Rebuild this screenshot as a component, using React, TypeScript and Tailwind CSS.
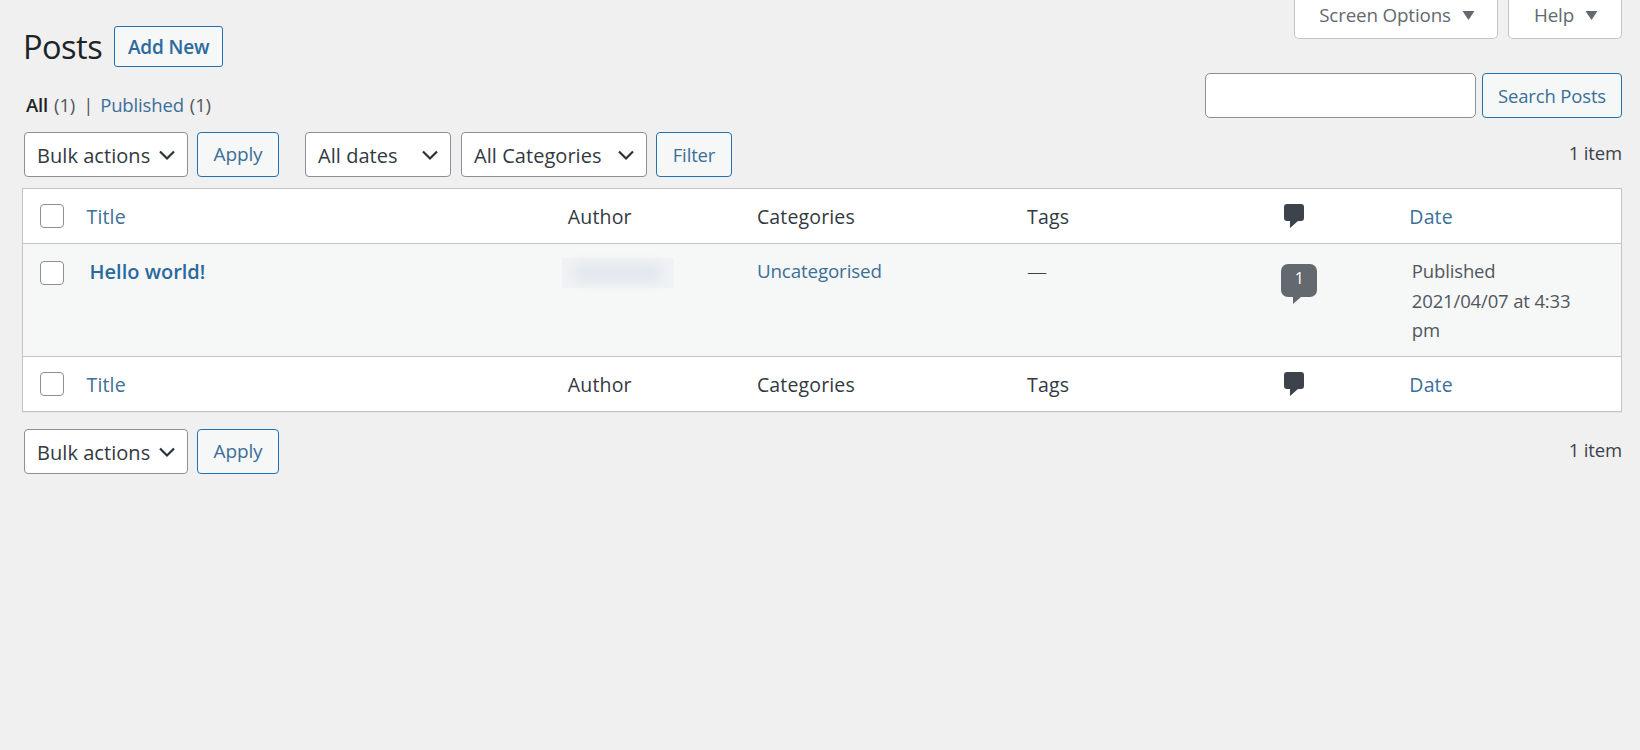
import React from "react";

const Chevron = () => (
  <svg width="18" height="12" viewBox="0 0 18 12" className="shrink-0">
    <path d="M2 2.5 L9 9.5 L16 2.5" fill="none" stroke="#2c3338" strokeWidth="2.2" />
  </svg>
);

const Caret = () => (
  <svg width="13" height="9" viewBox="0 0 13 9" className="shrink-0">
    <path d="M0.5 0 H12.5 L6.5 9 Z" fill="#646970" />
  </svg>
);

const CommentIcon = () => (
  <svg width="20" height="24" viewBox="0 0 20 24" className="block">
    <path d="M3 0 H17 Q20 0 20 3 V14 Q20 17 17 17 H14 L6 24 V17 H3 Q0 17 0 14 V3 Q0 0 3 0 Z" fill="#3c434a" />
  </svg>
);

function Select({ label, className }: { label: string; className: string }) {
  return (
    <div className={`flex h-[45px] items-center justify-between rounded-[4px] border border-[#8c8f94] bg-white pl-[12px] pr-[11px] text-[20px] tracking-[0.05px] text-[#32393f] ${className}`}>
      <span className="pt-[2px]">{label}</span>
      <Chevron />
    </div>
  );
}

function OutlineButton({ label, className }: { label: string; className: string }) {
  return (
    <button className={`flex h-[45px] items-center justify-center rounded-[4px] border border-[#2271b1] bg-[#f6f7f7] text-[#3b6f98] ${className}`}>
      {label}
    </button>
  );
}

function HeadRow({ top }: { top?: boolean }) {
  const cell = "p-0 font-normal text-left align-middle";
  return (
    <tr className={top ? "h-[55px] border-b border-[#c3c4c7] text-[19.5px] tracking-[0.15px]" : "h-[55px] text-[19.5px] tracking-[0.15px]"}>
      <td className={cell}>
        <input type="checkbox" className="ml-[17px] block h-[24px] w-[24px] appearance-none rounded-[4px] border border-[#8c8f94] bg-white" />
      </td>
      <td className={`${cell} pl-[9px] pt-px text-[#3b6f98]`}>Title</td>
      <td className={`${cell} pl-[11px] pt-px text-[#32393f]`}>Author</td>
      <td className={`${cell} pl-[11px] pt-px text-[#32393f]`}>Categories</td>
      <td className={`${cell} pl-[11px] pt-px text-[#32393f]`}>Tags</td>
      <td className={`${cell} pl-[11px]`}><CommentIcon /></td>
      <td className={`${cell} pl-[10px] pt-px text-[#3b6f98]`}>Date</td>
    </tr>
  );
}

export default function App() {
  return (
    <div className="h-[750px] overflow-hidden bg-[#f0f0f1] pl-[22px] pr-[18px] font-['Open_Sans','Liberation_Sans',sans-serif] text-[18.5px] tracking-[-0.15px] text-[#3c434a]">
      <div className="flex h-[132px] justify-between">
        <div className="pt-[26px]">
          <div className="flex items-center">
            <h1 className="ml-px text-[32.5px] leading-[41px] font-normal tracking-[-0.5px] text-[#1d2327]">Posts</h1>
            <button className="ml-[12px] flex h-[41px] w-[109px] items-center justify-center rounded-[3px] border border-[#2271b1] bg-[#f6f7f7] pt-[2px] text-[19px] font-semibold text-[#2a6a9c]">Add New</button>
          </div>
          <div className="mt-[23px] ml-[4px] flex items-center leading-[30px] text-[#50575e]">
            <span className="font-semibold text-[#1d2327]">All</span>
            <span className="ml-[6px]">(1)</span>
            <span className="mx-[8px]">|</span>
            <span className="-ml-px text-[#3b6f98]">Published</span>
            <span className="ml-[6px]">(1)</span>
          </div>
        </div>
        <div className="flex flex-col items-end">
          <div className="flex h-[39px] gap-[10px] text-[18.8px] text-[#646970]">
            <div className="flex w-[204px] items-center justify-center gap-[11px] rounded-b-[5px] border border-t-0 border-[#c3c4c7] bg-white pb-[8px] pl-[2px]">Screen Options <Caret /></div>
            <div className="flex w-[114px] items-center justify-center gap-[11px] rounded-b-[5px] border border-t-0 border-[#c3c4c7] bg-white pb-[8px] pl-[2px]">Help <Caret /></div>
          </div>
          <div className="mt-[34px] flex gap-[6px]">
            <input className="h-[45px] w-[271px] rounded-[5px] border border-[#8c8f94] bg-white" />
            <OutlineButton label="Search Posts" className="w-[140px]" />
          </div>
        </div>
      </div>

      <div className="flex h-[45px] items-start">
        <Select label="Bulk actions" className="ml-[2px] w-[164px]" />
        <OutlineButton label="Apply" className="ml-[9px] w-[82px] text-[19px]" />
        <Select label="All dates" className="ml-[26px] w-[146px]" />
        <Select label="All Categories" className="ml-[10px] w-[186px]" />
        <OutlineButton label="Filter" className="ml-[9px] w-[76px]" />
        <span className="ml-auto leading-[42px]">1 item</span>
      </div>

      <table className="mt-[11px] w-[1600px] table-fixed border border-[#c3c4c7] bg-white shadow-[0_1px_1px_rgba(0,0,0,0.04)]">
        <colgroup>
          <col className="w-[55px]" />
          <col className="w-[479px]" />
          <col className="w-[189px]" />
          <col className="w-[270px]" />
          <col className="w-[257px]" />
          <col className="w-[126px]" />
          <col className="w-[222px]" />
        </colgroup>
        <thead>
          <HeadRow top />
        </thead>
        <tbody>
          <tr className="h-[113px] border-b border-[#c3c4c7] bg-[#f6f7f7] align-top leading-[29.5px]">
            <td className="p-0">
              <input type="checkbox" className="mt-[17px] ml-[17px] block h-[24px] w-[24px] appearance-none rounded-[4px] border border-[#8c8f94] bg-white" />
            </td>
            <td className="p-0 pt-[13px] pl-[12px] text-[20px] tracking-normal font-semibold text-[#2a6a9c]">Hello world!</td>
            <td className="p-0 pt-[14px] pl-[5px]">
              <div className="flex h-[30px] w-[112px] items-center justify-center bg-[#f0f3f5]">
                <div className="h-[18px] w-[90px] rounded-full bg-[#e1e7ed] blur-[6px]" />
              </div>
            </td>
            <td className="p-0 pt-[13px] pl-[11px] text-[18.8px] text-[#3b6f98]">Uncategorised</td>
            <td className="p-0 pt-[13px] pl-[11px] text-[20px] font-light">—</td>
            <td className="p-0 pt-[20px] pl-[8px]">
              <div className="relative flex h-[33px] w-[36px] items-center justify-center rounded-[7px] bg-[#646970] pb-[4px] text-[16px] text-white">
                1
                <span className="absolute top-full left-[12px] border-t-[7px] border-r-[8px] border-t-[#646970] border-r-transparent" />
              </div>
            </td>
            <td className="p-0 pt-[12px] pl-[12.5px] pr-[10px] text-[#50575e]">Published<br />2021/04/07 at 4:33<br />pm</td>
          </tr>
        </tbody>
        <tfoot>
          <HeadRow />
        </tfoot>
      </table>

      <div className="mt-[17px] flex h-[45px] items-start">
        <Select label="Bulk actions" className="ml-[2px] w-[164px]" />
        <OutlineButton label="Apply" className="ml-[9px] w-[82px] text-[19px]" />
        <span className="ml-auto leading-[42px]">1 item</span>
      </div>
    </div>
  );
}
